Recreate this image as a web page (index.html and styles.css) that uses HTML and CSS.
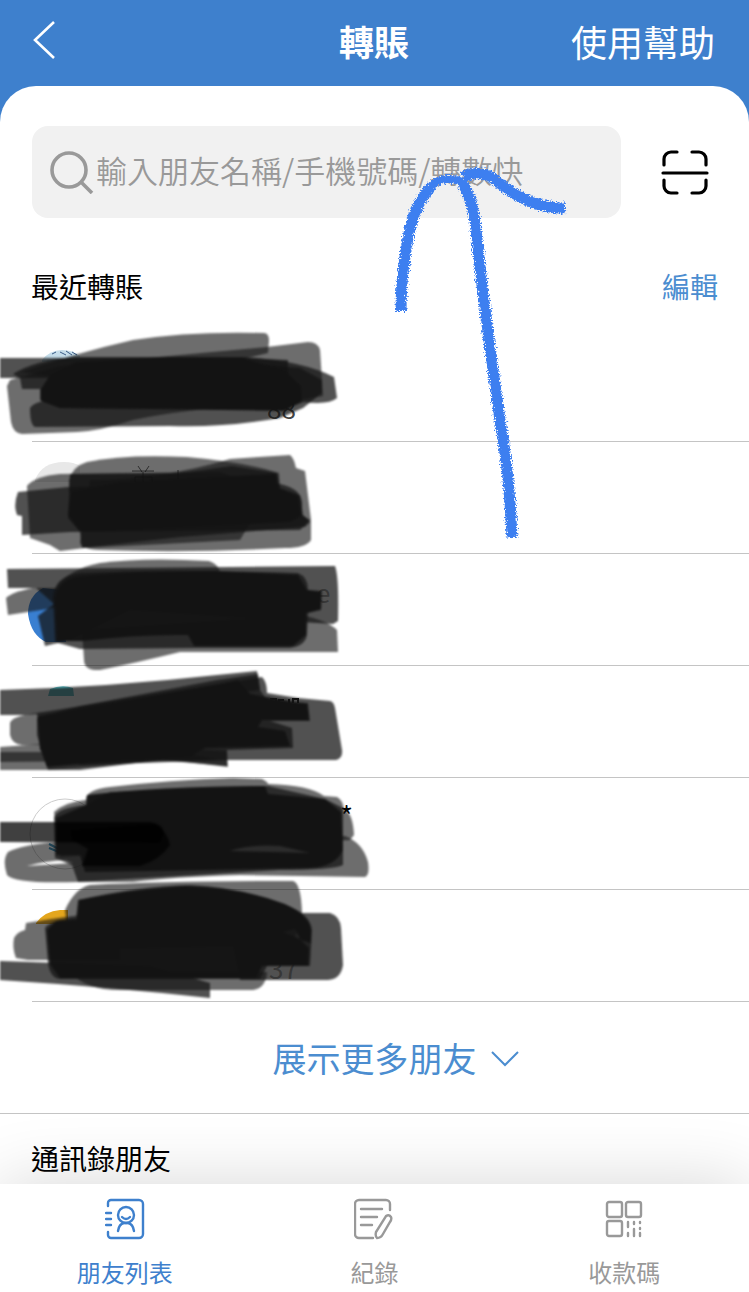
FILE: index.html
```html
<!DOCTYPE html>
<html lang="zh-Hant">
<head>
<meta charset="utf-8">
<meta name="viewport" content="width=device-width, initial-scale=1">
<title>轉賬</title>
<link rel="stylesheet" href="styles.css">
</head>
<body>
<header class="topbar">
  <button class="back" type="button" aria-label="返回">
    <svg width="24" height="40" viewBox="0 0 24 40" fill="none" stroke="#fff" stroke-width="2.600"><path d="M21 1 2 19l19 18"/></svg>
  </button>
  <h1 class="title">轉賬</h1>
  <a class="help" href="#help">使用幫助</a>
</header>

<main class="sheet">
  <div class="search-row">
    <label class="search">
      <svg class="search-icon" width="44" height="44" viewBox="0 0 44 44" fill="none" stroke="#999" stroke-width="3.600"><circle cx="19" cy="20" r="17"/><path d="M31 32 42 43"/></svg>
      <input class="search-input" type="search" aria-label="搜尋朋友" placeholder="輸入朋友名稱/手機號碼/轉數快">
    </label>
    <button class="scan" type="button" aria-label="掃描">
      <svg width="48" height="46" viewBox="0 0 48 46" fill="none" stroke="#000" stroke-width="3.200" stroke-linecap="round"><path d="M3 16v-6a7 7 0 0 1 7-7h6M31 3h7a7 7 0 0 1 7 7v6M3 31v6a7 7 0 0 0 7 7h6M31 44h7a7 7 0 0 0 7-7v-6M2 24h44"/></svg>
    </button>
  </div>

  <div class="section-head">
    <h2 class="section-title">最近轉賬</h2>
    <button class="edit" type="button">編輯</button>
  </div>

  <ul class="recent">
    <li class="friend">
      <svg class="mask" viewBox="0 330 380 112">
        <path d="M42 360Q50 350 62 350Q73 350 80 356L80 362H42Z" fill="#c5ddea"/><path d="M52 354l4-2M60 352l6 3M66 351l6 4M72 352l5 3" stroke="#3b5c86" stroke-width="1"/>
        <text class="digits" x="267" y="419">88</text>
        <g class="ink">
          <path class="thin" d="M20 372Q80 352 133 340Q190 331 264 333Q269 333 269 341L268 353Q230 363 180 368L50 376Z"/>
          <path d="M0 358H245L288 360V378H0Z"/>
          <path class="thin" d="M10 380L60 366L267 347L308 342Q318 342 320 350L323 396L290 402Q190 408 133 420Q100 431 77 432L22 434Q13 433 11 422L7 386Z"/>
          <path d="M13 374Q35 360 75 357H242Q300 360 334 377L337 398Q329 405 304 402L282 410L60 408L40 400V389H22L20 378Z"/>
          <path d="M30 408Q35 400 58 400L50 392V375L210 360L300 368L322 380V393L303 408L280 418Q220 428 170 426L35 427Q30 425 30 408Z"/>
          <path class="core" d="M41 401V389L50 375L76 362L170 357L243 358L285 371L301 386L302 401L285 411L150 409L60 408Z"/>
        </g>
      </svg>
    </li>
    <li class="friend">
      <svg class="mask" viewBox="0 442 380 112">
        <path d="M35 480Q42 462 64 462Q74 462 80 466V482H35Z" fill="#e8e8e8"/>
        <g class="ink">
          <path class="thin" d="M69 480Q73 466 87 462Q125 454 187 457Q245 462 279 473L280 490L90 498L69 492Z"/>
          <path class="thin" d="M90 480Q160 480 230 459L290 455Q294 458 296 468L305 471L311 520V540Q306 548 285 548Q190 553 100 550Q80 549 80 542Z"/>
          <path class="thin" d="M27 486Q35 476 60 474L220 472L270 490L240 540L85 548L60 551L50 545L30 538Z"/>
          <path d="M18 492L68 487L280 484Q300 488 302 502V515L310 520L300 530L70 532L22 535V516L17 515Q13 505 18 492Z"/>
          <path d="M70 474L180 473L232 466L277 473L280 488L300 495L303 515L310 522L305 527L180 537L82 548L80 532L68 518Z"/>
          <path class="core" d="M71 492L120 482L276 474L278 488L298 496L301 516L290 522L110 531L80 531L68 515Z"/>
        </g>
        <path d="M138 466l4 6M149 466l-4 6M132 471h22M135 477h17V482M135 477V482M143 472v10M178 470v9" fill="none" stroke="#111" opacity=".7"/>
      </svg>
    </li>
    <li class="friend">
      <svg class="mask" viewBox="0 554 380 112">
        <path d="M43 588Q28 596 28 614Q31 635 46 642H66L60 590Z" fill="#397fd1"/><text class="digits faint" x="316" y="603">e</text>
        <g class="ink">
          <path d="M7 569L335 566Q339 576 338 621L333 624L300 622L130 610L70 640L45 646L38 616L54 604L36 588L8 588Z"/>
          <path class="thin" d="M56 588Q68 569 100 563Q145 557 209 561Q221 565 220 576Z"/>
          <path class="thin" d="M6 598Q12 592 33 588L100 588L80 604L8 615Z"/>
          <path d="M53 598Q54 576 80 573Q160 569 298 573Q308 577 308 590L322 591L321 610L308 613L307 635Q305 646 290 648H196L80 649L55 642Z"/>
          <path class="thin" d="M82 630L300 615Q327 620 337 630L338 652L180 652Q135 663 100 670Q84 671 84 660Z"/>
          <path class="core" d="M55 600Q57 582 75 577Q130 570 215 571L298 575L307 590L321 592V609L306 613V635L293 646H194L188 635Q140 634 82 641L57 641Z"/>
        </g>
      </svg>
    </li>
    <li class="friend">
      <svg class="mask" viewBox="0 666 380 112">
        <path d="M50 689Q62 684 73 688L74 696H48Z" fill="#56bac2"/><path d="M271 704v-5h5v5M279 703v-3h5M289 703v-4M293 703v-4h5v4" fill="none" stroke="#111" stroke-width="2"/>
        <g class="ink">
          <path d="M0 690Q110 687 217 675L257 671L260 690L100 710L25 715H0Z"/>
          <path d="M37 713L262 677Q267 682 267 693L298 698L330 701Q334 702 335 708L342 750Q343 758 336 760H228L80 765L40 750Z"/>
          <path class="thin" d="M10 723Q12 716 37 713H70V745H22Q12 744 10 735Z"/>
          <path class="thin" d="M0 747L70 742L227 751L228 767L170 760L50 770H0Z"/>
          <path class="thin" d="M0 752H180L220 760L0 762Z"/>
          <path d="M37 718L80 706L217 680L258 674L260 690L267 700L308 703L310 721H270L292 728L293 748L227 750V766L160 760L80 770H48L42 752L37 735Z"/>
          <path class="core" d="M38 716L215 685L238 680L250 694L307 704L309 720H262L258 727L285 731L290 746L205 748L190 757L90 763L47 767L40 748Z"/>
        </g>
      </svg>
    </li>
    <li class="friend">
      <svg class="mask" viewBox="0 778 380 112">
        <circle cx="65" cy="834" r="35" fill="#fff" stroke="#ccc" stroke-width="1"/><path d="M49 844l10 5M49 848l10 4" stroke="#388fb9" stroke-width="2"/>
        <text class="star" x="340" y="827">*</text>
        <g class="ink">
          <path class="thin" d="M54 812Q65 802 86 800Q85 790 110 787Q170 780 233 778L262 779Q268 782 268 784Q310 785 324 796L337 797Q343 800 344 810Q353 813 354 835L350 840L60 857Z"/>
          <path class="thin" fill-rule="evenodd" d="M55 842Q22 845 8 852Q2 860 7 875Q15 884 77 882H133Q170 877 240 875L365 877Q370 875 368 862Q363 843 345 836L150 835ZM27 866Q45 861 66 860L73 863Z"/>
          <path d="M54 818Q56 808 86 805L110 792L268 786L325 799L343 808V865Q333 870 280 870L78 882L72 865L55 858Z"/>
          <path class="core" fill-rule="evenodd" d="M56 818L86 805L87 795Q160 786 265 786L268 794L325 799L341 812L343 850Q335 867 310 868L150 871L85 872L80 855L56 855ZM230 851Q250 844 280 846L310 853Z"/>
        </g>
        <g class="soft">
          <path opacity=".75" d="M0 822H150Q163 824 164 833L160 843L0 842Z"/>
          <path opacity=".7" d="M70 830L155 824Q168 832 170 845Q160 860 140 866H82L88 849L72 840Z"/>
        </g>
      </svg>
    </li>
    <li class="friend">
      <svg class="mask" viewBox="0 890 380 112">
        <path d="M36 923Q45 911 60 910H68V924H36Z" fill="#e4a61d"/><text class="digits faint" x="269" y="979">37</text>
        <g class="ink">
          <path class="thin" d="M65 910Q75 888 90 885Q170 881 293 881Q301 883 302 913L293 945L70 950Z"/>
          <path d="M300 913H330Q340 916 341 928L343 965Q341 979 328 980H240L230 930Z"/>
          <path class="thin" d="M26 923Q45 920 65 917L120 910V960H28L16 958Q12 948 14 938Q17 932 25 930Z"/>
          <path d="M0 961L150 966L210 983V998Q110 987 0 980Z"/>
          <path class="thin" d="M70 972H267Q266 988 253 990H120Q85 990 70 972Z"/>
          <path d="M45 928Q50 920 76 918L78 900Q140 886 190 885Q240 887 285 905Q310 913 312 930L310 966H267L260 979H60Q50 978 48 963Z"/>
          <path class="core" d="M47 930L56 921L77 920L79 900Q130 890 183 886Q240 887 285 904Q309 915 311 930V943L301 940L295 929L283 932L300 939L309 948L308 966H262L256 978H60L50 964Z"/>
        </g>
      </svg>
    </li>
  </ul>

  <button class="more" type="button">展示更多朋友
    <svg width="28" height="18" viewBox="0 0 28 18" fill="none" stroke="#4b8dd0" stroke-width="2"><path d="m1 3 13 13L27 3"/></svg>
  </button>

  <section class="contacts"><h2 class="section-title">通訊錄朋友</h2></section>

  <svg class="arrow" width="200" height="400" viewBox="380 150 200 400" aria-hidden="true">
    <defs>
      <filter id="crayon" x="-10%" y="-10%" width="120%" height="120%"><feTurbulence type="fractalNoise" baseFrequency=".7" numOctaves="2" seed="4"/><feDisplacementMap in="SourceGraphic" scale="7" xChannelSelector="R" yChannelSelector="G"/></filter>
    </defs>
    <g fill="none" stroke="#3d7ff0" filter="url(#crayon)">
      <path stroke-width="11" d="M401 311Q401 280 406 250Q412 205 432 186"/>
      <path stroke-width="8" d="M429 188Q438 178 450 179Q463 179 467 190"/>
      <path stroke-width="11" d="M463 184Q473 200 476 230L482 285L489 340L500 420Q509 470 512 537"/>
      <path stroke-width="11" d="M463 177Q482 168 498 182Q531 209 565 208"/>
    </g>
  </svg>
</main>

<nav class="tabs">
  <a class="tab active" href="#friends">
    <svg width="40" height="42" viewBox="0 0 40 42" fill="none" stroke="currentColor" stroke-width="2.400" stroke-linecap="round"><path d="M3 8V5a3 3 0 0 1 3-3h28a4 4 0 0 1 4 4v30a4 4 0 0 1-4 4H6a3 3 0 0 1-3-3v-3M1 15h5M1 21h5M1 27h5"/><circle cx="21" cy="17" r="8"/><path d="M17 19q4 4 8 0M13 33q1-7 6-8h4q5 1 6 8"/></svg>
    <span>朋友列表</span>
  </a>
  <a class="tab" href="#records">
    <svg width="40" height="42" viewBox="0 0 40 42" fill="none" stroke="currentColor" stroke-width="2.400" stroke-linecap="round"><path d="M36 12V6a4 4 0 0 0-4-4H5a4 4 0 0 0-4 4v30a4 4 0 0 0 4 4h14M7 11h21M7 19h16M7 27h11M32 18q3-2 5 1 1 2-1 5l-7 12q-2 4-6 4-2-2-1-6Z"/></svg>
    <span>紀錄</span>
  </a>
  <a class="tab" href="#code">
    <svg width="40" height="42" viewBox="0 0 40 42" fill="none" stroke="currentColor" stroke-width="2.400" stroke-linecap="round"><rect x="3" y="4" width="15" height="15" rx="2"/><rect x="22" y="4" width="15" height="15" rx="2"/><rect x="3" y="23" width="15" height="15" rx="2"/><path d="M24 24v5M30 24v2M36 24v1M24 35v3M30 31v7M36 30v1M36 35v3"/></svg>
    <span>收款碼</span>
  </a>
</nav>
</body>
</html>
```
FILE: styles.css
```css
* { box-sizing: border-box; }

body {
  margin: 0;
  min-height: 100vh;
  display: flex;
  flex-direction: column;
  background: #3e80cd;
  color: #000;
  font-family: "Noto Sans CJK TC", sans-serif;
  font-size: 28px;
  line-height: 40px;
}

button {
  padding: 0;
  border: 0;
  background: none;
  font: inherit;
  cursor: pointer;
}

a { text-decoration: none; }
svg { display: block; flex: none; }
h1, h2 { margin: 0; }

.topbar {
  display: grid;
  grid-template-columns: 1fr auto 1fr;
  align-items: center;
  height: 86px;
  padding: 0 34px 4px 33px;
  color: #fff;
}
.back { justify-self: start; }
.title { font-size: 35px; font-weight: 700; }
.help { justify-self: end; color: #fff; font-size: 36px; }

.sheet {
  position: relative;
  flex: 1;
  background: #fff;
  border-radius: 36px 36px 0 0;
}

.search-row {
  display: flex;
  align-items: center;
  gap: 40px;
  padding: 40px 40px 0 32px;
}
.search {
  flex: 1;
  display: flex;
  align-items: center;
  gap: 2px;
  height: 92px;
  padding: 0 18px;
  border-radius: 16px;
  background: #f1f1f1;
}
.search-input {
  flex: 1;
  min-width: 0;
  padding: 0 0 4px;
  border: 0;
  outline: 0;
  background: none;
  font: inherit;
  font-size: 31px;
}
.search-input::placeholder { color: #999; opacity: 1; font-weight: 350; }

.section-head {
  display: flex;
  justify-content: space-between;
  align-items: center;
  height: 112px;
  padding: 24px 31px 0;
}
.section-title { font-size: 28px; font-weight: 400; }
.edit { color: #4b8dd0; }

.recent { margin: 0; padding: 0; list-style: none; }
.friend {
  position: relative;
  height: 112px;
}
.friend::after {
  content: "";
  position: absolute;
  inset: auto 0 0 32px;
  border-bottom: 1px solid #c4c4c4;
}
.mask {
  position: absolute;
  z-index: 1;
  top: 0;
  left: 0;
  width: 380px;
  height: 112px;
  overflow: visible;
}
.ink { fill: #141414; filter: blur(1px); }
.ink path { opacity: .74; }
.ink .thin { opacity: .62; }
.ink .core { opacity: .97; }
.soft { filter: blur(1px); }
.digits { font-size: 26px; fill: #444; }
.faint { fill: #999; }
.star { font-size: 28px; }

.more {
  display: flex;
  align-items: center;
  justify-content: center;
  gap: 14px;
  width: 100%;
  height: 112px;
  padding-left: 42px;
  border-bottom: 1px solid #c4c4c4;
  color: #4b8dd0;
  font-size: 34px;
}

.contacts { padding: 24px 31px 6px; }

.arrow {
  position: absolute;
  z-index: 2;
  top: 64px;
  left: 380px;
  pointer-events: none;
}

.tabs {
  position: sticky;
  z-index: 3;
  bottom: 0;
  display: grid;
  grid-template-columns: repeat(3, 1fr);
  height: 108px;
  background: #fff;
  box-shadow: 0 0 70px rgba(0, 0, 0, .16);
}
.tab {
  display: flex;
  flex-direction: column;
  align-items: center;
  gap: 14px;
  padding-top: 14px;
  color: #999;
  font-size: 24px;
  line-height: 36px;
}
.tab.active { color: #3e80cd; }
```
